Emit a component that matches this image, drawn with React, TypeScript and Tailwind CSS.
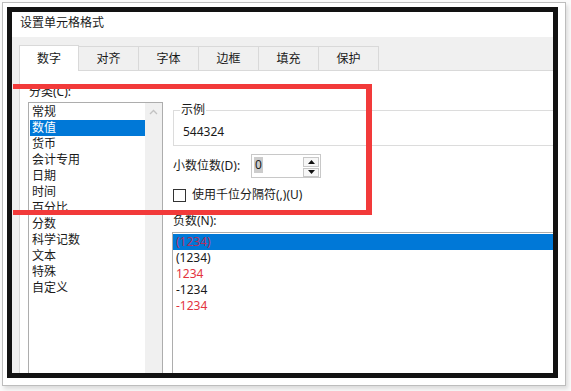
import React from "react";

const categories = ["常规", "数值", "货币", "会计专用", "日期", "时间", "百分比", "分数", "科学记数", "文本", "特殊", "自定义"];

const negatives = [
  { text: "(1234)", red: true },
  { text: "(1234)", red: false },
  { text: "1234", red: true },
  { text: "-1234", red: false },
  { text: "-1234", red: true },
];

const tabs = ["数字", "对齐", "字体", "边框", "填充", "保护"];

export default function App() {
  return (
    <div className="relative w-[571px] h-[391px] bg-[#fafafa] pt-[2px] pl-[2px] overflow-hidden font-['Noto_Sans','Noto_Sans_CJK_SC',sans-serif] text-[12px] leading-[16px] text-[#1a1a1a]">
      {/* outer photo frame */}
      <div className="w-[564px] h-[384px] border border-[#bdbdbd] bg-white p-[4px] shadow-[2px_3px_4px_rgba(0,0,0,0.12)]">
        <div className="w-[551px] h-[371px] border-[5px] border-[#121212] bg-[#f0f0f0] overflow-hidden flex flex-col">
          {/* title */}
          <div className="h-[25px] shrink-0 bg-white pl-[8px] pt-[3px]">设置单元格格式</div>

          {/* tabs */}
          <div className="h-[33px] shrink-0 flex items-end pl-[7px]">
            {tabs.map((t, i) =>
              i === 0 ? (
                <div key={t} className="relative z-10 -mb-px w-[60px] h-[26px] bg-white border border-b-0 border-[#d9d9d9] flex items-center justify-center">
                  {t}
                </div>
              ) : (
                <div key={t} className="w-[60px] h-[24px] border border-l-0 border-b-0 border-[#d9d9d9] flex items-center justify-center">
                  {t}
                </div>
              )
            )}
          </div>

          {/* panel */}
          <div className="flex-1 ml-[7px] bg-white border-l border-t border-[#d9d9d9] flex overflow-hidden">
            {/* category list */}
            <div className="w-[143px] shrink-0 pl-[8px] pt-[13px] flex flex-col">
              <div className="pl-[1px]">分类(C):</div>
              <div className="mt-[2px] w-[135px] h-[300px] shrink-0 border border-[#adadad] flex">
                <div className="flex-1 pt-[1px] pl-[1px]">
                  {categories.map((c, i) => (
                    <div
                      key={c}
                      className={i === 1 ? "h-[16px] pl-[2px] bg-[#0078d7] text-white" : "h-[16px] pl-[2px]"}
                    >
                      {c}
                    </div>
                  ))}
                </div>
                <div className="w-[17px] bg-[#f0f0f0] flex justify-center pt-[6px]">
                  <svg width="9" height="6" viewBox="0 0 9 6">
                    <path d="M1 5 L4.5 1.5 L8 5" fill="none" stroke="#c2c2c2" strokeWidth="1.3" />
                  </svg>
                </div>
              </div>
            </div>

            {/* right side */}
            <div className="flex-1 ml-[10px] flex flex-col">
              <fieldset className="mt-[31px] border border-r-0 border-[#dcdcdc] pt-[6px] pb-[5px]">
                <legend className="ml-[6px] px-[1px]">示例</legend>
                <div className="pl-[9px]">544324</div>
              </fieldset>

              <div className="mt-[8px] flex items-center h-[24px]">
                <div className="w-[78px]">小数位数(D):</div>
                <div className="w-[70px] h-[24px] border border-[#c8c8c8] flex justify-between pl-[2px] pt-[2px]">
                  <span className="bg-[#cccccc] px-[1px] h-[16px]">0</span>
                  <div className="mr-[1px] flex flex-col gap-[1px]">
                    <div className="w-[16px] h-[10px] border border-[#c8c8c8] bg-[#f7f7f7] flex items-center justify-center">
                      <svg width="7" height="4" viewBox="0 0 7 4">
                        <path d="M0 4 L3.5 0 L7 4 Z" fill="#111" />
                      </svg>
                    </div>
                    <div className="w-[16px] h-[10px] border border-[#c8c8c8] bg-[#f7f7f7] flex items-center justify-center">
                      <svg width="7" height="4" viewBox="0 0 7 4">
                        <path d="M0 0 L7 0 L3.5 4 Z" fill="#111" />
                      </svg>
                    </div>
                  </div>
                </div>
              </div>

              <div className="mt-[9px] h-[16px] flex items-center">
                <div className="w-[13px] h-[13px] border border-[#333] bg-white" />
                <div className="ml-[6px]">使用千位分隔符(,)(U)</div>
              </div>

              <div className="mt-[10px]">负数(N):</div>
              <div className="mt-[3px] -ml-px h-[200px] shrink-0 border border-r-0 border-[#adadad] pt-px">
                {negatives.map((n, i) => (
                  <div
                    key={i}
                    className={
                      i === 0
                        ? "h-[16px] pl-[3px] bg-[#0078d7] text-[#b23060]"
                        : n.red
                        ? "h-[16px] pl-[3px] text-[#e3343f]"
                        : "h-[16px] pl-[3px]"
                    }
                  >
                    {n.text}
                  </div>
                ))}
              </div>
            </div>
          </div>
        </div>
      </div>

      {/* red annotation box */}
      <div className="absolute left-[13px] top-[84px] w-[359px] h-[131px] border-t-[5px] border-r-[6px] border-b-[5px] border-[#f23a3a]" />
    </div>
  );
}
